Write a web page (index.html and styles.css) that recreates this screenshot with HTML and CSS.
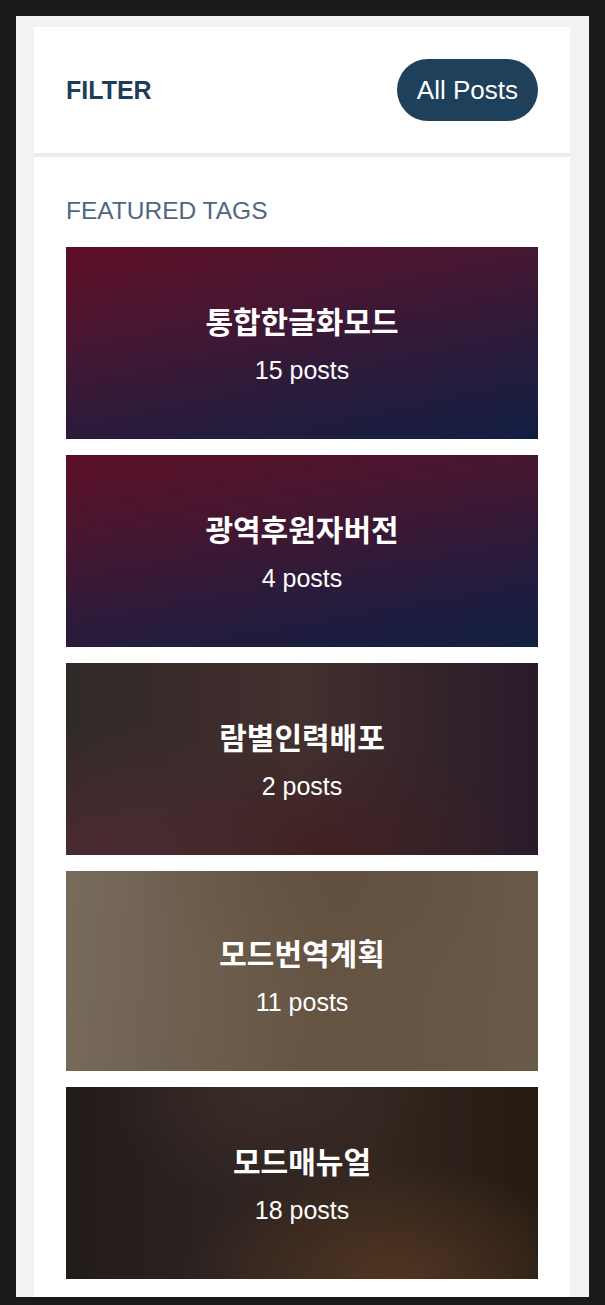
FILE: index.html
```html
<!DOCTYPE html>
<html lang="ko">
<head>
    <meta charset="UTF-8">
    <meta name="viewport" content="width=device-width, initial-scale=1.0">
    <title>Filter</title>
    <link rel="stylesheet" href="styles.css">
</head>
<body>
    <div class="panel">
        <div class="sidebar">
            <div class="filter-head">
                <span class="filter-title">FILTER</span>
                <button class="pill">All Posts</button>
            </div>

            <div class="featured">
                <div class="featured-label">FEATURED TAGS</div>
                <div class="tag-list">
                    <a class="tag-card tag-crimson" href="#">
                        <div class="tag-name">통합한글화모드</div>
                        <div class="tag-count">15 posts</div>
                    </a>
                    <a class="tag-card tag-crimson-2" href="#">
                        <div class="tag-name">광역후원자버전</div>
                        <div class="tag-count">4 posts</div>
                    </a>
                    <a class="tag-card tag-wine" href="#">
                        <div class="tag-name">람별인력배포</div>
                        <div class="tag-count">2 posts</div>
                    </a>
                    <a class="tag-card tag-taupe tag-tall" href="#">
                        <div class="tag-name">모드번역계획</div>
                        <div class="tag-count">11 posts</div>
                    </a>
                    <a class="tag-card tag-umber" href="#">
                        <div class="tag-name">모드매뉴얼</div>
                        <div class="tag-count">18 posts</div>
                    </a>
                </div>
            </div>
        </div>
    </div>
</body>
</html>
```

FILE: styles.css
```css
html, body {
    overflow: hidden;
}
body {
    margin: 0;
    padding: 16px 16px 8px 16px;
    background-color: #1a1a1a;
    font-family: 'Liberation Sans', Arial, sans-serif;
}
.panel {
    background: #f1f2f4;
    padding: 11px 19px 0 18px;
}
.sidebar {
    background: #ffffff;
}
.filter-head {
    display: flex;
    align-items: center;
    justify-content: space-between;
    padding: 32px 32px;
    border-bottom: 4px solid #e7ecf0;
}
.filter-title {
    font-size: 25px;
    font-weight: bold;
    color: #1d3e5b;
}
.pill {
    height: 62px;
    padding: 0 20px;
    font-family: 'Liberation Sans', Arial, sans-serif;
    font-size: 26px;
    color: #ffffff;
    background-color: #1e405b;
    border: none;
    border-radius: 31px;
    cursor: pointer;
}
.featured {
    padding: 40px 32px 18px 32px;
}
.featured-label {
    font-size: 24.5px;
    line-height: 28px;
    color: #4e677f;
    margin-bottom: 22px;
}
.tag-list {
    display: flex;
    flex-direction: column;
    gap: 16px;
}
.tag-card {
    height: 192px;
    box-sizing: border-box;
    display: flex;
    flex-direction: column;
    align-items: center;
    justify-content: center;
    color: #ffffff;
    text-decoration: none;
}
.tag-tall {
    height: 200px;
    padding-top: 8px;
}
.tag-name {
    font-family: 'Noto Sans CJK KR', 'Noto Sans', sans-serif;
    font-size: 30px;
    font-weight: bold;
    line-height: 36px;
}
.tag-count {
    font-size: 25px;
    line-height: 30px;
    margin-top: 17px;
}
.tag-crimson {
    background: linear-gradient(168deg, #5e0e25 0%, #4a1631 30%, #2f1a39 60%, #1d1d40 85%, #121e43 100%);
}
.tag-crimson-2 {
    background: linear-gradient(170deg, #5b0f26 0%, #48162f 30%, #2d1a3a 62%, #1b1d41 85%, #13203f 100%);
}
.tag-wine {
    background:
        radial-gradient(ellipse 45% 70% at 5% 100%, rgba(82, 42, 52, 0.8), rgba(82, 42, 52, 0) 100%),
        radial-gradient(ellipse 40% 60% at 55% 100%, rgba(64, 28, 32, 0.8), rgba(64, 28, 32, 0) 100%),
        linear-gradient(90deg, #2f2a29 0%, #3c2c2b 30%, #43302f 50%, #35242a 75%, #2a1b2a 100%);
}
.tag-taupe {
    background:
        radial-gradient(ellipse 40% 60% at 55% 0%, rgba(94, 76, 60, 0.5), rgba(94, 76, 60, 0) 100%),
        linear-gradient(95deg, #776b5c 0%, #6d5e4e 30%, #655442 55%, #665644 80%, #6a5b49 100%);
}
.tag-umber {
    background:
        radial-gradient(ellipse 45% 60% at 70% 100%, rgba(88, 56, 34, 0.8), rgba(88, 56, 34, 0) 100%),
        radial-gradient(ellipse 35% 60% at 42% 0%, rgba(62, 46, 42, 0.8), rgba(62, 46, 42, 0) 100%),
        linear-gradient(90deg, #221c1b 0%, #2d2321 35%, #32261f 65%, #251b13 100%);
}
```
